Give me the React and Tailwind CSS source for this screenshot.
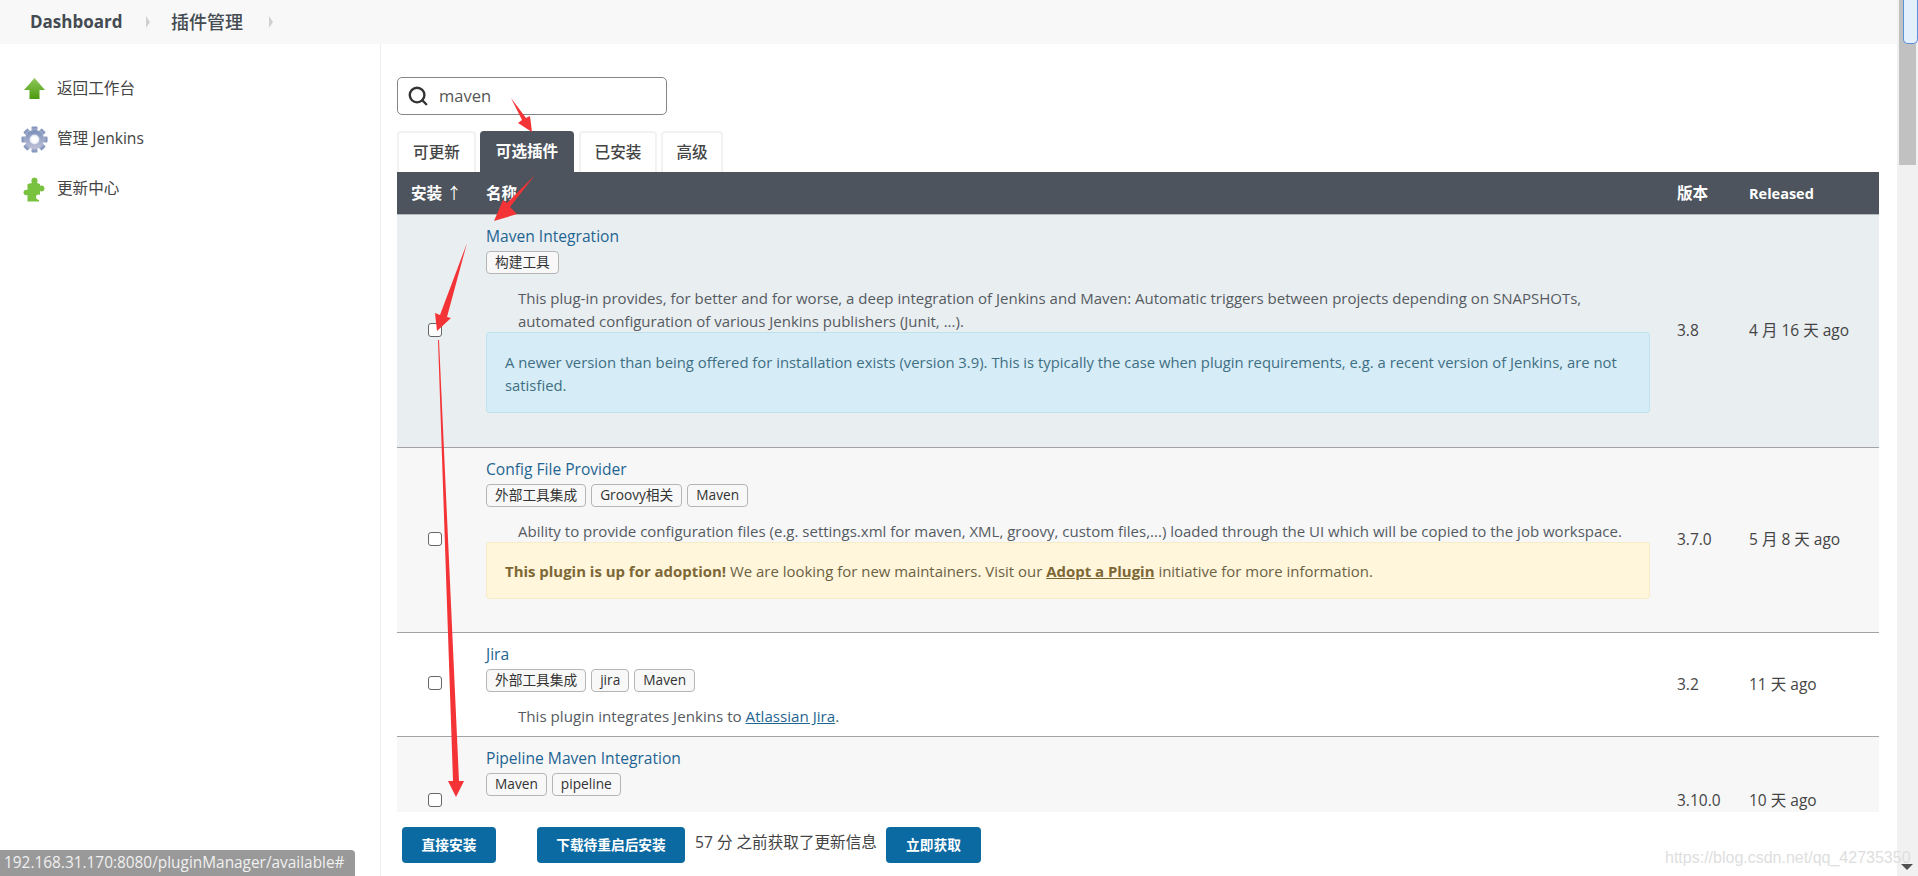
import { Search } from "lucide-react"

const plugins = [
  {
    name: "Maven Integration",
    tags: ["构建工具"],
    rowClass: "h-[233px] bg-[#e9eef1] border-[#b3babf]",
    desc: "This plug-in provides, for better and for worse, a deep integration of Jenkins and Maven: Automatic triggers between projects depending on SNAPSHOTs, automated configuration of various Jenkins publishers (Junit, ...).",
    version: "3.8",
    released: "4 月 16 天 ago",
  },
  {
    name: "Config File Provider",
    tags: ["外部工具集成", "Groovy相关", "Maven"],
    rowClass: "h-[185px] bg-[#f7f7f8] border-[#a3a3a3]",
    desc: "Ability to provide configuration files (e.g. settings.xml for maven, XML, groovy, custom files,...) loaded through the UI which will be copied to the job workspace.",
    version: "3.7.0",
    released: "5 月 8 天 ago",
  },
  {
    name: "Jira",
    tags: ["外部工具集成", "jira", "Maven"],
    rowClass: "h-[104px] bg-white border-[#a3a3a3]",
    version: "3.2",
    released: "11 天 ago",
  },
  {
    name: "Pipeline Maven Integration",
    tags: ["Maven", "pipeline"],
    rowClass: "h-[129px] bg-[#f7f7f8] border-[#a3a3a3]",
    version: "3.10.0",
    released: "10 天 ago",
  },
]

function Chevron() {
  return (
    <svg width="6" height="14" viewBox="0 0 6 14">
      <path d="M1 1 L5 7 L1 13 Z" fill="#d0d0d0" />
    </svg>
  )
}

function UpIcon() {
  return (
    <svg width="21" height="22" viewBox="0 0 21 22">
      <defs>
        <linearGradient id="up" x1="0" y1="0" x2="0" y2="1">
          <stop offset="0" stopColor="#8fc85a" />
          <stop offset="1" stopColor="#4c9a10" />
        </linearGradient>
      </defs>
      <path d="M10.5 0 L21 12 L15.5 12 L15.5 21 L5.5 21 L5.5 12 L0 12 Z" fill="url(#up)" />
    </svg>
  )
}

function GearIcon() {
  const teeth = [0, 45, 90, 135, 180, 225, 270, 315]
  return (
    <svg width="27" height="27" viewBox="0 0 27 27">
      <defs>
        <linearGradient id="gear" x1="0" y1="0" x2="0" y2="1">
          <stop offset="0" stopColor="#7a8fb9" />
          <stop offset="1" stopColor="#c0c2d8" />
        </linearGradient>
        <radialGradient id="hole">
          <stop offset="0.55" stopColor="#ffffff" />
          <stop offset="1" stopColor="#d9dcec" />
        </radialGradient>
      </defs>
      <g fill="url(#gear)">
        {teeth.map((a) => (
          <rect key={a} x="10.5" y="0.5" width="6" height="6" rx="1" transform={`rotate(${a} 13.5 13.5)`} />
        ))}
        <circle cx="13.5" cy="13.5" r="9.5" />
      </g>
      <circle cx="13.5" cy="13.5" r="5" fill="url(#hole)" />
    </svg>
  )
}

function PuzzleIcon() {
  return (
    <svg width="22" height="25" viewBox="0 0 22 25">
      <path
        d="M9 6 C7.5 3.5 9 0.5 11.5 0.5 C14 0.5 15.5 3.5 14 6 L17 7 L17 9 C19 8 21.5 9 21.5 11.5 C21.5 14 19 15 17 14 L17 18 C15 17 13 18 13 20 C13 21.5 14 22.5 16 23 L16 24.5 L4.5 24.5 L4.5 18 C2.5 19 0.5 17.5 0.5 15.5 C0.5 13.5 2.5 12 4.5 13 L4.5 7 Z"
        fill="#79c23f"
      />
    </svg>
  )
}

function Tag({ children }) {
  return (
    <span className="h-[23px] px-[8px] flex items-center bg-[#f8f8f8] border border-[#b5b5b5] rounded-[4px] text-[13.7px] text-[#333]">
      {children}
    </span>
  )
}

function PluginRow({ plugin, children }) {
  return (
    <div className={`grid grid-cols-[89px_1fr_72px_130px] items-center border-t ${plugin.rowClass}`}>
      <div className="pl-[31px] pb-[3px] flex">
        <span className="w-[14px] h-[14px] bg-white border border-[#666] rounded-[3px]" />
      </div>
      <div className="self-start pt-[10px] pr-[27px]">
        <a className="block leading-[23px] text-[#1f6592] font-medium">{plugin.name}</a>
        <div className="flex gap-[5px] mt-[3px]">
          {plugin.tags.map((t) => (
            <Tag key={t}>{t}</Tag>
          ))}
        </div>
        {plugin.desc && <p className="mt-[13px] pl-[32px] leading-[23px] text-[15px] text-[#555b61]">{plugin.desc}</p>}
        {children}
      </div>
      <div className="text-[#444] text-[15.5px]">{plugin.version}</div>
      <div className="text-[#444] text-[15.5px]">{plugin.released}</div>
    </div>
  )
}

export default function App() {
  return (
    <div className="relative h-[876px] flex overflow-hidden bg-white text-[15.6px] text-[#333] font-['Open_Sans','Noto_Sans_CJK_SC',sans-serif]">
      <div className="flex-1 flex flex-col min-w-0">
        <header className="h-[44px] bg-[#f8f8f8] flex items-center pl-[30px]">
          <b className="w-[115px] text-[17px] text-[#444b52]">Dashboard</b>
          <Chevron />
          <b className="ml-[20px] w-[97px] text-[18px] font-medium text-[#444b52]">插件管理</b>
          <Chevron />
        </header>

        <div className="flex-1 flex min-h-0">
          <aside className="w-[381px] border-r border-[#eeeeee] pt-[20px] pl-4">
            {[
              { icon: <UpIcon />, label: "返回工作台" },
              { icon: <GearIcon />, label: "管理 Jenkins" },
              { icon: <PuzzleIcon />, label: "更新中心" },
            ].map((item) => (
              <div key={item.label} className="h-[50px] flex items-center gap-[5px] text-[#444]">
                <span className="w-[36px] flex justify-center">{item.icon}</span>
                {item.label}
              </div>
            ))}
          </aside>

          <main className="flex-1 min-w-0 pl-[16px] pr-[18px] pt-[33px]">
            <div className="w-[270px] h-[38px] border border-[#858585] rounded-[5px] flex items-center pl-[9px] gap-[10px]">
              <Search size={22} strokeWidth={2.6} className="text-[#333]" />
              <span className="text-[16.5px] text-[#555]">maven</span>
            </div>

            <div className="flex mt-[16px] h-[41px] font-medium">
              <div className="w-[79px] border-2 border-b-0 border-[#f2f2f2] rounded-t-[4px] flex items-center justify-center text-[#444]">可更新</div>
              <div className="ml-[4px] w-[94px] bg-[#4d545d] rounded-t-[4px] flex items-center justify-center text-white font-bold">可选插件</div>
              <div className="ml-[5px] w-[78px] border-2 border-b-0 border-[#f2f2f2] rounded-t-[4px] flex items-center justify-center text-[#444]">已安装</div>
              <div className="ml-[4px] w-[62px] border-2 border-b-0 border-[#f2f2f2] rounded-t-[4px] flex items-center justify-center text-[#444]">高级</div>
            </div>

            <div className="h-[640px] overflow-hidden">
              <div className="h-[42px] pt-[2px] grid grid-cols-[89px_1fr_72px_130px] items-center bg-[#4d545d] text-white font-bold">
                <span className="pl-[14px]">
                  安装 <span className="font-normal">↑</span>
                </span>
                <span>名称</span>
                <span>版本</span>
                <span className="text-[14.5px]">Released</span>
              </div>

              <PluginRow plugin={plugins[0]}>
                <div className="mt-[-1px] bg-[#d6ecf6] border border-[#bfe3ec] rounded-[3px] pt-[18px] pb-[15px] px-[18px] leading-[23px] text-[14.85px] text-[#3f6f84]">
                  A newer version than being offered for installation exists (version 3.9). This is typically the case when plugin requirements, e.g. a recent version of Jenkins, are not satisfied.
                </div>
              </PluginRow>
              <PluginRow plugin={plugins[1]}>
                <div className="mt-[-1px] bg-[#fff6dc] border border-[#f8ecc4] rounded-[3px] pt-[17px] pb-[15px] px-[18px] leading-[23px] text-[14.95px] text-[#6b6243]">
                  <b className="text-[#7d6735]">This plugin is up for adoption!</b> We are looking for new maintainers. Visit our{" "}
                  <a className="font-bold underline text-[#7d6735]">Adopt a Plugin</a> initiative for more information.
                </div>
              </PluginRow>
              <PluginRow plugin={plugins[2]}>
                <p className="mt-[13px] pl-[32px] leading-[23px] text-[15.15px] text-[#555b61]">
                  This plugin integrates Jenkins to <a className="font-medium underline text-[#1f6592]">Atlassian Jira</a>.
                </p>
              </PluginRow>
              <PluginRow plugin={plugins[3]} />
            </div>

            <div className="flex items-start mt-[15px] ml-[5px] text-[13.7px] font-bold text-white">
              <button className="w-[94px] h-[36px] bg-[#0b6aa2] rounded-[4px]">直接安装</button>
              <button className="ml-[41px] w-[148px] h-[36px] bg-[#0b6aa2] rounded-[4px]">下载待重启后安装</button>
              <span className="ml-[10px] w-[191px] h-[32px] flex items-center text-[15.6px] font-normal text-[#444] whitespace-nowrap">57 分 之前获取了更新信息</span>
              <button className="w-[95px] h-[36px] bg-[#0b6aa2] rounded-[4px]">立即获取</button>
            </div>
          </main>
        </div>
      </div>

      {/* scrollbar */}
      <div className="w-[21px] bg-[#f1f1f1] px-[2px]">
        <div className="h-[165px] bg-[#c1c1c1]" />
      </div>
      <div className="absolute top-0 right-0 w-[15px] h-[44px] bg-[#e3effc] border border-t-0 border-[#5b8fd6] rounded-b-[5px]" />
      <svg className="absolute right-[5px] bottom-[6px]" width="12" height="6" viewBox="0 0 12 6">
        <path d="M0 0 H12 L6 6 Z" fill="#505050" />
      </svg>

      {/* status bar link preview */}
      <div className="absolute left-0 bottom-0 w-[355px] h-[26px] bg-[#999999] rounded-tr-[4px] flex items-center pl-[4px] text-[15.4px] text-[#f0f0f0] whitespace-nowrap">
        192.168.31.170:8080/pluginManager/available#
      </div>

      {/* csdn watermark */}
      <div className="absolute left-[1665px] top-[846px] text-[16px] leading-[24px] text-[#dedede] font-['Liberation_Sans',sans-serif] whitespace-nowrap">
        https://blog.csdn.net/qq_42735350
      </div>

      {/* red annotation arrows */}
      <svg className="absolute inset-0 pointer-events-none" width="1918" height="876" viewBox="0 0 1918 876">
        <g fill="#f43336">
          <polygon points="511,98 526,118 530,116 532,132 518,123 522,120" />
          <polygon points="535,175 510,207 517,214 494,221 503,200 507,203" />
          <polygon points="467,243 447,317 451,318 437,331 435,313 440,315" />
          <polygon points="438,340 439,340 459,781 464,781 456,797 448,781 453,781" />
        </g>
      </svg>
    </div>
  )
}
